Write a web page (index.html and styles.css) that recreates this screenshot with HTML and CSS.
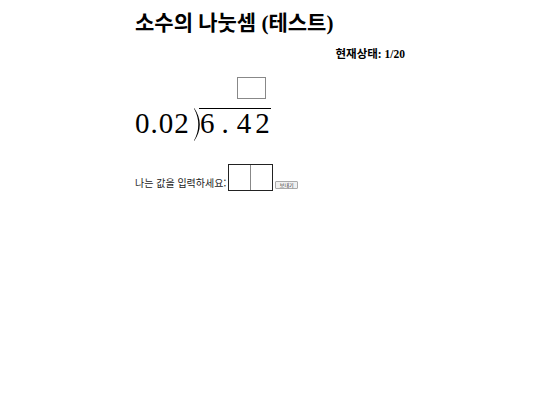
FILE: index.html
```html
<!DOCTYPE html>
<html lang="ko">
<head>
<meta charset="utf-8">
<link rel="stylesheet" href="styles.css">
</head>
<body>
<div class="wrap">
  <h1 class="title">소수의 나눗셈 <span class="latin">(</span>테스트<span class="latin">)</span></h1>
  <div class="status">현재상태<span class="latin">: 1/20</span></div>
  <div class="division">
    <div class="quotient-row"><span class="qbox"></span></div>
    <div class="expr"><span class="divisor">0.02</span><svg class="bracket" width="6" height="33" viewBox="0 0 6 33"><path d="M0.2 0 Q11.4 16.5 0.2 33 L0 32.6 Q8.6 16.5 0 0.4 Z" fill="#000"/></svg><span class="dividend">6<span class="dot">.</span><span class="four">4</span>2</span></div>
  </div>
  <div class="answer">
    <span class="label">나는 값을 입력하세요:</span>
    <span class="inputs"><span class="cell"></span><span class="cell cell2"></span></span>
    <button class="send">보내기</button>
  </div>
</div>
</body>
</html>
```
FILE: styles.css
```css
html, body { margin: 0; padding: 0; background: #fff; }
body { font-family: "Liberation Serif", "Noto Sans CJK KR", serif; color: #000; }
.latin { font-family: "Liberation Serif", serif; }
.wrap { width: 270px; margin: 0 auto; padding-top: 10px; }
.title { font-size: 21px; font-weight: bold; margin: 0; line-height: 26px; }
.status { text-align: right; font-size: 11.5px; font-weight: bold; margin-top: 11px; line-height: 14px; }
.division { margin-top: 16px; }
.quotient-row { padding-left: 102px; height: 31px; }
.qbox { display: block; width: 27px; height: 20px; border: 1px solid #888; }
.expr { font-size: 29px; line-height: 28px; height: 33px; white-space: nowrap; font-family: "Liberation Serif", serif; }
.divisor { letter-spacing: 1px; }
.bracket { display: inline-block; vertical-align: top; margin-left: 4.25px; margin-right: -1px; }
.dividend { display: inline-block; vertical-align: baseline; border-top: 1px solid #000; padding-left: 1px; padding-right: 1.3px; line-height: 28px; }
.dividend .dot { margin-left: 7px; margin-right: 8px; }
.dividend .four { margin-right: 4px; }
.answer { display: flex; align-items: flex-end; margin-top: 23px; font-family: "Noto Sans CJK KR", sans-serif; }
.label { font-size: 10px; color: #222; line-height: 14px; margin-bottom: 1px; }
.inputs { display: flex; margin-left: 2px; border: 1px solid #222; }
.cell { width: 21px; height: 25px; }
.cell2 { border-left: 1px solid #888; }
.send { box-sizing: border-box; width: 23px; height: 8px; font-size: 5px; padding: 0; margin-left: 2px; margin-bottom: 2px; line-height: 6px; border: 1px solid #aaa; background: #f0f0f0; border-radius: 1px; color: #333; font-family: "Noto Sans CJK KR", sans-serif; }
```
